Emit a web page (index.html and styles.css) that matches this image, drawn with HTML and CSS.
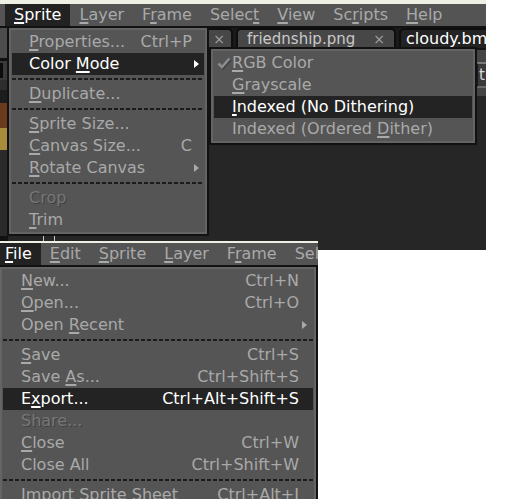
FILE: index.html
```html
<!DOCTYPE html>
<html>
<head>
<meta charset="utf-8">
<link rel="stylesheet" href="styles.css">
</head>
<body>
<div class="shot shot-top">
  <div class="strip"></div>
  <div class="menubar">
    <span class="mb-item active"><u>S</u>prite</span>
    <span class="mb-item"><u>L</u>ayer</span>
    <span class="mb-item">F<u>r</u>ame</span>
    <span class="mb-item">Selec<u>t</u></span>
    <span class="mb-item"><u>V</u>iew</span>
    <span class="mb-item">Sc<u>r</u>ipts</span>
    <span class="mb-item"><u>H</u>elp</span>
  </div>
  <div class="workspace">
    <div class="sidebar">
      <div class="sb sb-a"></div>
      <div class="sb sb-b"></div>
      <div class="sb sb-c"><span class="sb-square"></span></div>
      <div class="sb sb-d"></div>
      <div class="sb sb-e"></div>
      <div class="sb sb-brown"></div>
      <div class="sb sb-gold"></div>
      <div class="sb sb-f"></div>
    </div>
    <div class="main">
      <div class="tabs">
        <div class="tab tab-first"><span class="tab-x">×</span></div>
        <div class="tab tab-file"><span>friednship.png</span><span class="tab-x">×</span></div>
        <div class="tab tab-active"><span>cloudy.bmp</span></div>
      </div>
      <div class="contextbar">
        <div class="field">tiles</div>
      </div>
      <div class="editor">
        <div class="editor-marks"><span class="mark"></span><span class="mark"></span></div>
      </div>
    </div>
  </div>

  <div class="menu menu-sprite">
    <div class="mi"><span class="label"><u>P</u>roperties...</span><span class="key">Ctrl+P</span></div>
    <div class="mi hl"><span class="label">Color <u>M</u>ode</span><span class="arrow"></span></div>
    <div class="sep"></div>
    <div class="mi"><span class="label"><u>D</u>uplicate...</span></div>
    <div class="sep"></div>
    <div class="mi"><span class="label"><u>S</u>prite Size...</span></div>
    <div class="mi"><span class="label"><u>C</u>anvas Size...</span><span class="key">C</span></div>
    <div class="mi"><span class="label"><u>R</u>otate Canvas</span><span class="arrow"></span></div>
    <div class="sep"></div>
    <div class="mi dis"><span class="label">Crop</span></div>
    <div class="mi"><span class="label"><u>T</u>rim</span></div>
  </div>

  <div class="menu menu-color">
    <div class="mi"><span class="check"><svg width="16" height="14" viewBox="0 0 16 14"><path d="M2.5 7.5 L6 11 L13.5 2.5" fill="none" stroke="#3a3a3a" stroke-width="2.6" transform="translate(1 1)"/><path d="M2.5 7.5 L6 11 L13.5 2.5" fill="none" stroke="#8c8c8c" stroke-width="2.6"/></svg></span><span class="label"><u>R</u>GB Color</span></div>
    <div class="mi"><span class="check"></span><span class="label"><u>G</u>rayscale</span></div>
    <div class="mi hl"><span class="check"></span><span class="label"><u>I</u>ndexed (No Dithering)</span></div>
    <div class="mi"><span class="check"></span><span class="label">Indexed (Ordered <u>D</u>ither)</span></div>
  </div>
</div>

<div class="bottom-row">
  <div class="shot shot-bottom">
    <div class="strip strip-thin"></div>
    <div class="menubar">
      <div class="menubar-inner">
        <span class="mb-item active"><u>F</u>ile</span>
        <span class="mb-item"><u>E</u>dit</span>
        <span class="mb-item"><u>S</u>prite</span>
        <span class="mb-item"><u>L</u>ayer</span>
        <span class="mb-item">F<u>r</u>ame</span>
        <span class="mb-item">Selec<u>t</u></span>
      </div>
    </div>
    <div class="menu menu-file">
      <div class="mi"><span class="label"><u>N</u>ew...</span><span class="key">Ctrl+N</span></div>
      <div class="mi"><span class="label"><u>O</u>pen...</span><span class="key">Ctrl+O</span></div>
      <div class="mi"><span class="label">Open <u>R</u>ecent</span><span class="arrow"></span></div>
      <div class="sep"></div>
      <div class="mi"><span class="label"><u>S</u>ave</span><span class="key">Ctrl+S</span></div>
      <div class="mi"><span class="label">Save <u>A</u>s...</span><span class="key">Ctrl+Shift+S</span></div>
      <div class="mi hl"><span class="label">E<u>x</u>port...</span><span class="key">Ctrl+Alt+Shift+S</span></div>
      <div class="mi dis"><span class="label">Share...</span></div>
      <div class="mi"><span class="label"><u>C</u>lose</span><span class="key">Ctrl+W</span></div>
      <div class="mi"><span class="label">Close All</span><span class="key">Ctrl+Shift+W</span></div>
      <div class="sep"></div>
      <div class="mi"><span class="label"><u>I</u>mport Sprite Sheet</span><span class="key">Ctrl+Alt+I</span></div>
    </div>
  </div>
  <div class="filler"></div>
</div>
</body>
</html>
```

FILE: styles.css
```css
* { box-sizing: border-box; }
html, body { margin: 0; padding: 0; background: #ffffff; }
body {
  font-family: "DejaVu Sans", "Liberation Sans", sans-serif;
  font-size: 16px;
  color: #a9a9a9;
  width: 522px;
  height: 499px;
  overflow: hidden;
}
u {
  text-decoration-thickness: 2px;
  text-underline-offset: 2px;
  text-decoration-skip-ink: none;
}

.shot { position: relative; overflow: hidden; background: #262626; }
.shot-top { width: 486px; height: 241px; }

.strip { height: 4px; background: #eef0e4; }
.strip-thin { height: 2px; }

.menubar {
  height: 22px;
  line-height: 22px;
  background: #545454;
  display: flex;
  padding-left: 5px;
  white-space: nowrap;
}
.menubar-inner { display: flex; margin-left: -9px; }
.mb-item { padding: 0 9px; }
.mb-item.active { background: #222222; color: #ffffff; }

.workspace {
  display: flex;
  height: 215px;
  border-top: 2px solid #111111;
}
.sidebar { width: 8px; display: flex; flex-direction: column; }
.sb-a { height: 30px; background: #4c4c4c; }
.sb-b { height: 3px; background: #111111; }
.sb-c { height: 19px; background: #3a3a3a; padding-top: 2px; }
.sb-square { display: block; width: 3px; height: 15px; background: #0c0c0c; }
.sb-d { height: 10px; background: #2e2e2e; }
.sb-e { height: 13px; background: #1d1d1d; }
.sb-brown { height: 25px; background: #6c3a1c; }
.sb-gold { height: 22px; background: #a88b3b; }
.sb-f { flex: 1; background: #2a2a2a; border-bottom: 5px solid #111111; }

.main { flex: 1; display: flex; flex-direction: column; min-width: 0; }
.tabs {
  height: 20px;
  display: flex;
  align-items: flex-end;
  background: #1a1a1a;
  white-space: nowrap;
}
.tab {
  height: 20px;
  border: 2px solid #0e0e0e;
  border-bottom: 0;
  border-radius: 5px 5px 0 0;
  background: #474747;
  color: #c9c9c9;
  font-size: 15px;
  line-height: 18px;
  display: flex;
  align-items: center;
  justify-content: space-between;
  margin-right: 3px;
  flex-shrink: 0;
}
.tab-first { width: 40px; margin-left: 185px; justify-content: flex-end; padding-right: 6px; }
.tab-file { width: 160px; padding: 0 9px 0 9px; }
.tab-active { width: 100px; background: #232323; color: #ffffff; padding-left: 5px; font-size: 16px; }
.tab-x { color: #a0a0a0; font-size: 14px; }

.contextbar {
  height: 48px;
  background: #454545;
  border-top: 2px solid #151515;
  padding-top: 12px;
  padding-left: 468px;
}
.field {
  height: 26px;
  background: #3a3a3a;
  border-top: 2px solid #7a7a7a;
  border-bottom: 2px solid #6a6a6a;
  border-left: 2px solid #1a1a1a;
  color: #d8d8d8;
  font-size: 15px;
  line-height: 22px;
  padding-left: 1px;
  white-space: nowrap;
}
.editor { flex: 1; background: #262626; display: flex; align-items: flex-end; }
.editor-marks { display: flex; gap: 10px; margin-left: 35px; height: 5px; }
.mark { width: 1px; background: #c8c8c8; }

.menu {
  position: absolute;
  background: #555555;
  border: 2px solid #121212;
  padding: 3px;
  box-shadow: inset 0 0 0 2px #646464;
  white-space: nowrap;
}
.menu-sprite { left: 7px; top: 26px; width: 202px; }
.menu-color { left: 209px; top: 47px; width: 268px; }

.mi {
  height: 22px;
  line-height: 22px;
  display: flex;
  align-items: center;
  padding: 0 12px 0 17px;
}
.mi .label { flex: 1; }
.mi.hl { background: #232323; color: #ffffff; }
.mi.dis { color: #777777; text-shadow: 1px 1px 0 #404040; }
.sep {
  height: 8px;
  background: repeating-linear-gradient(90deg, #1b1b1b 0 4px, transparent 4px 6px) 0 3px / 100% 2px no-repeat;
}
.arrow {
  width: 0;
  height: 0;
  border-left: 5px solid currentColor;
  border-top: 4px solid transparent;
  border-bottom: 4px solid transparent;
  margin-right: -7px;
}

.menu-color .mi { padding-left: 2px; }
.check { width: 16px; height: 14px; display: flex; }

.bottom-row { display: flex; align-items: flex-start; }
.shot-bottom { width: 318px; height: 258px; background: #555555; }
.filler { width: 168px; height: 9px; background: #262626; }

.menu-file {
  position: static;
  width: 320px;
  margin-left: -2px;
  padding-left: 3px;
}
.menu-file .mi { padding: 0 14px 0 18px; }
.menu-file .arrow { margin-right: -8px; }
```
